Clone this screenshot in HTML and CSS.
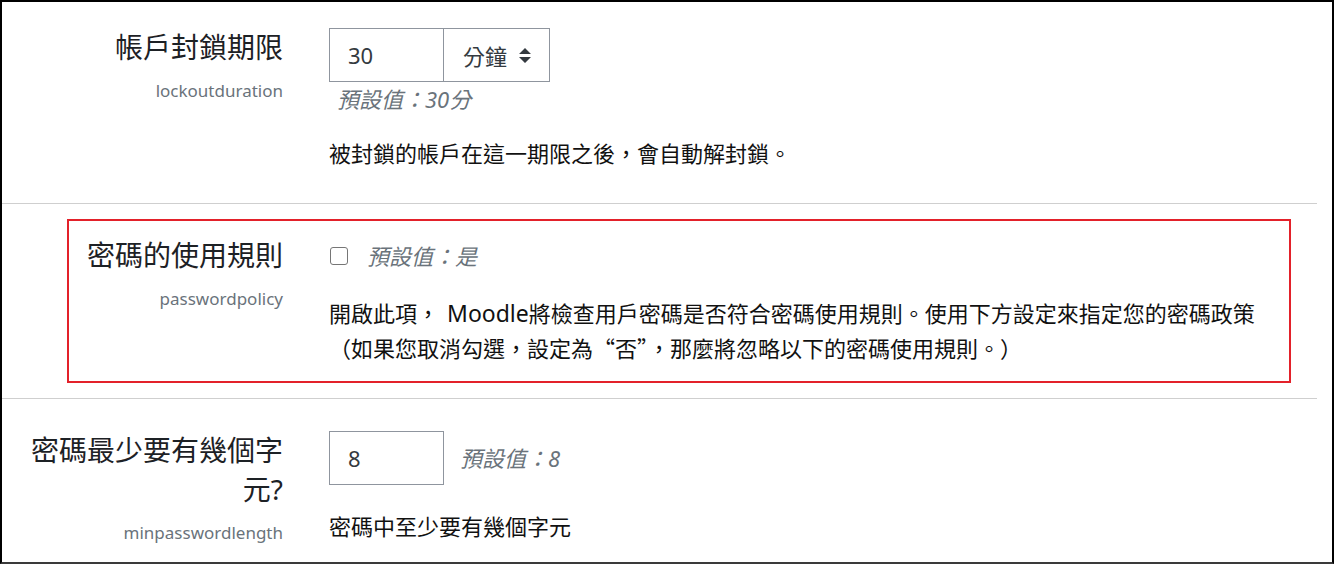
FILE: index.html
```html
<!DOCTYPE html>
<html lang="zh-Hant">
<head>
<meta charset="utf-8">
<title>密碼設定</title>
<link rel="stylesheet" href="styles.css">
</head>
<body>
<div class="frame">
  <div class="settings">
    <div class="setting first">
      <div class="label-col">
        <div class="label">帳戶封鎖期限</div>
        <div class="shortname">lockoutduration</div>
      </div>
      <div class="content-col">
        <div class="input-group">
          <input class="text-input" type="text" value="30">
          <div class="select">
            <span>分鐘</span>
            <svg class="select-arrow" viewBox="0 0 4 5" width="12" height="15"><path d="M2 0L0 2h4zm0 5L0 3h4z"/></svg>
          </div>
        </div>
        <div class="defaultinfo">預設值：30分</div>
        <div class="desc">被封鎖的帳戶在這一期限之後，會自動解封鎖。</div>
      </div>
    </div>

    <div class="setting flagged">
      <div class="label-col">
        <div class="label">密碼的使用規則</div>
        <div class="shortname">passwordpolicy</div>
      </div>
      <div class="content-col">
        <div class="check-line">
          <input class="checkbox" type="checkbox">
          <span class="defaultinfo inline">預設值：是</span>
        </div>
        <div class="desc">開啟此項，<span class="latin">Moodle</span>將檢查用戶密碼是否符合密碼使用規則。使用下方設定來指定您的密碼政策（如果您取消勾選，設定為<span class="cjk">“否”</span>，那麼將忽略以下的密碼使用規則。）</div>
      </div>
      <div class="highlight"></div>
    </div>

    <div class="setting">
      <div class="label-col">
        <div class="label">密碼最少要有幾個字元?</div>
        <div class="shortname">minpasswordlength</div>
      </div>
      <div class="content-col">
        <div class="inline-line">
          <input class="text-input" type="text" value="8">
          <span class="defaultinfo inline">預設值：8</span>
        </div>
        <div class="desc">密碼中至少要有幾個字元</div>
      </div>
    </div>
  </div>
</div>
</body>
</html>
```

FILE: styles.css
```css
html, body {
  margin: 0;
  padding: 0;
  background: #ffffff;
}

body {
  font-family: "Noto Sans", "Noto Sans CJK TC", sans-serif;
  color: #1d2125;
}

.frame {
  width: 1334px;
  height: 564px;
  box-sizing: border-box;
  border: 2px solid #000000;
  border-bottom-color: #3a3a3a;
  overflow: hidden;
}

.settings {
  width: 1315px;
}

.setting {
  display: grid;
  grid-template-columns: 281px 1fr;
  column-gap: 46px;
  padding: 32px 0 33px;
  border-top: 1px solid #cfcfcf;
}

.setting.first {
  border-top: none;
  padding-top: 26px;
}

.setting.flagged {
  position: relative;
}

.label {
  font-size: 28px;
  line-height: 39px;
  text-align: right;
  color: #1d2125;
}

.shortname {
  font-size: 17px;
  line-height: 25px;
  color: #6a737b;
  text-align: right;
  margin-top: 11px;
}

.input-group {
  display: flex;
  height: 54px;
}

.text-input {
  width: 115px;
  height: 54px;
  box-sizing: border-box;
  margin: 0;
  border: 1px solid #8f959e;
  border-radius: 0;
  padding: 0 18px;
  font-family: "Noto Sans", "Noto Sans CJK TC", sans-serif;
  font-size: 22px;
  color: #343a40;
  background: #ffffff;
  outline: none;
}

.select {
  width: 107px;
  height: 54px;
  box-sizing: border-box;
  margin-left: -1px;
  border: 1px solid #8f959e;
  padding: 0 18px 0 19px;
  display: flex;
  align-items: center;
  justify-content: space-between;
  font-size: 22px;
  color: #343a40;
}

.select-arrow {
  display: block;
  fill: #343a40;
}

.defaultinfo {
  font-size: 22px;
  line-height: 34px;
  font-style: italic;
  color: #6a737b;
  padding-left: 8px;
}

.defaultinfo.inline {
  display: inline-block;
}

.check-line {
  display: flex;
  align-items: center;
  height: 40px;
}

.checkbox {
  appearance: none;
  -webkit-appearance: none;
  width: 18px;
  height: 18px;
  box-sizing: border-box;
  margin: 0 0 0 1px;
  border: 1.5px solid #767676;
  border-radius: 3px;
  background: #ffffff;
}

.check-line .defaultinfo {
  margin-left: 11px;
}

.inline-line {
  display: flex;
  align-items: center;
  height: 54px;
  padding-bottom: 4px;
}

.inline-line .defaultinfo {
  margin-left: 8px;
}

.desc {
  font-size: 22px;
  line-height: 34px;
  margin-top: 20px;
  max-width: 955px;
  color: #111111;
}

.latin {
  font-size: 23px;
  margin-left: 8px;
}

.cjk {
  font-family: "Noto Sans CJK TC", sans-serif;
}

.highlight {
  position: absolute;
  top: 15px;
  left: 65px;
  width: 1224px;
  height: 164px;
  box-sizing: border-box;
  border: 2px solid #e3212a;
  pointer-events: none;
}
```
